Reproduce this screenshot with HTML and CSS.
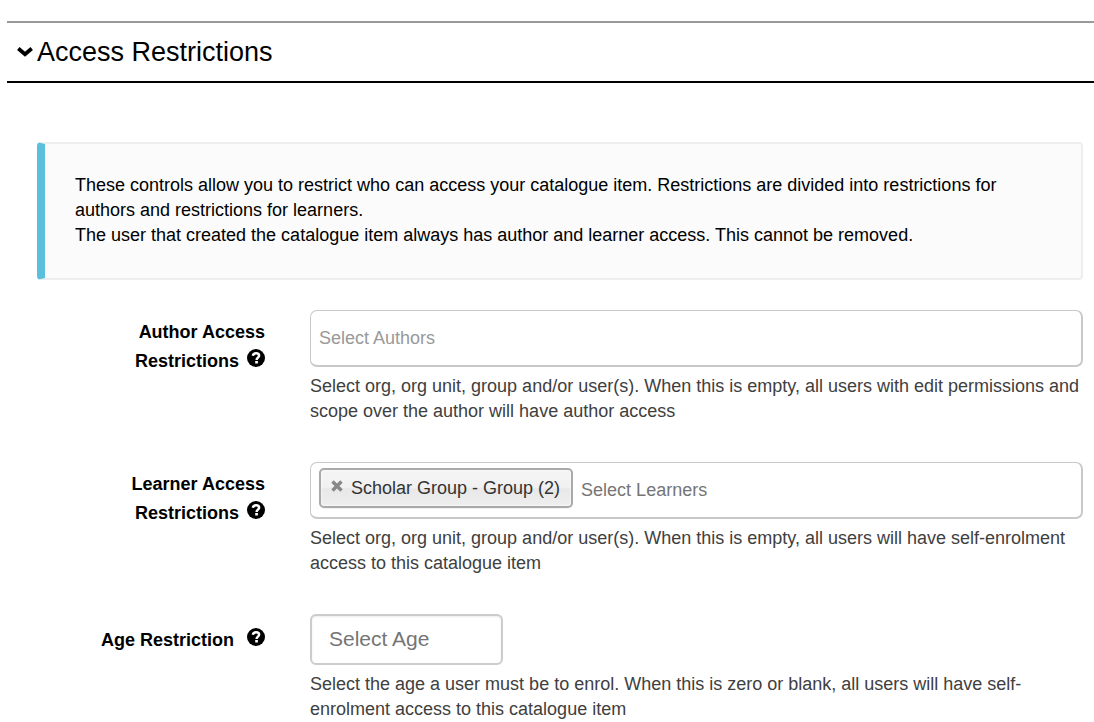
FILE: index.html
```html
<!DOCTYPE html>
<html lang="en">
<head>
<meta charset="utf-8">
<meta name="viewport" content="width=device-width, initial-scale=1">
<title>Access Restrictions</title>
<link rel="stylesheet" href="styles.css">
</head>
<body>
<svg class="sprite" aria-hidden="true">
  <symbol id="icon-help" viewBox="0 0 18 18">
    <circle cx="9" cy="9" r="9" fill="#000"/>
    <path d="M5.800 6.700C6.200 4.900 7.400 4.200 9.100 4.200s3 .9 3 2.400c0 2-2.500 2-2.500 4.300" fill="none" stroke="#fff" stroke-width="2.500"/>
    <rect x="8.200" y="12" width="2.700" height="2.500" fill="#fff"/>
  </symbol>
</svg>
<main class="section">
  <h2 class="section-title">
    <button class="section-toggle" type="button" aria-expanded="true">
      <svg class="chevron" viewBox="0 0 16 10" aria-hidden="true"><path d="M1.300 1.500 8 7.200l6.700-5.700" fill="none" stroke="#000" stroke-width="3.800"/></svg>
      <span>Access Restrictions</span>
    </button>
  </h2>
  <form class="section-body">
    <div class="callout">
      <p>These controls allow you to restrict who can access your catalogue item. Restrictions are divided into restrictions for authors and restrictions for learners.</p>
      <p>The user that created the catalogue item always has author and learner access. This cannot be removed.</p>
    </div>

    <div class="row">
      <div class="label-cell">
        <label for="authors">Author Access Restrictions</label>
        <button class="help" type="button" aria-label="Help for author access"><svg aria-hidden="true"><use href="#icon-help"/></svg></button>
      </div>
      <div class="control">
        <div class="picker">
          <input class="picker-input picker-input-light" id="authors" type="text" placeholder="Select Authors">
        </div>
        <p class="hint">Select org, org unit, group and/or user(s). When this is empty, all users with edit permissions and scope over the author will have author access</p>
      </div>
    </div>

    <div class="row">
      <div class="label-cell">
        <label for="learners">Learner Access Restrictions</label>
        <button class="help" type="button" aria-label="Help for learner access"><svg aria-hidden="true"><use href="#icon-help"/></svg></button>
      </div>
      <div class="control">
        <div class="picker">
          <span class="tag">
            <button class="tag-remove" type="button" aria-label="Remove Scholar Group"><svg viewBox="0 0 12 12" aria-hidden="true"><path d="M1.500 1.500l9 9M10.500 1.500l-9 9" stroke="#888" stroke-width="3.400"/></svg></button>
            <span>Scholar Group - Group (2)</span>
          </span>
          <input class="picker-input" id="learners" type="text" placeholder="Select Learners">
        </div>
        <p class="hint">Select org, org unit, group and/or user(s). When this is empty, all users will have self-enrolment access to this catalogue item</p>
      </div>
    </div>

    <div class="row">
      <div class="label-cell label-cell-single">
        <label for="age">Age Restriction</label>
        <button class="help" type="button" aria-label="Help for age restriction"><svg aria-hidden="true"><use href="#icon-help"/></svg></button>
      </div>
      <div class="control">
        <input class="age-input" id="age" type="text" placeholder="Select Age">
        <p class="hint">Select the age a user must be to enrol. When this is zero or blank, all users will have self-enrolment access to this catalogue item</p>
      </div>
    </div>
  </form>
</main>
</body>
</html>
```
FILE: styles.css
```css
* {
  box-sizing: border-box;
}

body {
  margin: 0;
  background: #fff;
  color: #000;
  font: 18px/25px "Liberation Sans", Arial, sans-serif;
}

p {
  margin: 0;
}

button {
  padding: 0;
  border: 0;
  background: none;
  color: inherit;
  font: inherit;
  cursor: pointer;
}

svg {
  display: block;
}

.sprite {
  position: absolute;
  width: 0;
  height: 0;
}

.section {
  padding: 21px 0 0 7px;
}

.section-title {
  margin: 0;
  border-top: 2px solid #999;
  border-bottom: 2px solid #000;
  font-size: 27px;
  font-weight: 400;
  line-height: 58px;
}

.section-toggle {
  display: flex;
  align-items: center;
  gap: 4px;
  width: 100%;
  padding-left: 10px;
  text-align: left;
}

.chevron {
  width: 16px;
  height: 10px;
  overflow: visible;
}

.section-body {
  padding: 59px 11px 0 30px;
}

.callout {
  margin-bottom: 30px;
  padding: 29px 30px 30px;
  border: 2px solid #eee;
  border-left: 8px solid #5bc0de;
  border-radius: 4px;
  background: #fbfbfb;
}

.row {
  display: grid;
  grid-template-columns: 228px minmax(0, 1fr);
  column-gap: 45px;
  margin-bottom: 38px;
}

.row:last-child {
  margin-bottom: 0;
}

.label-cell {
  padding: 8px 0 0 60px;
  font-weight: 700;
  line-height: 29px;
  text-align: right;
}

.label-cell-single {
  padding: 12px 0 0;
}

.label-cell-single label {
  padding-right: 5px;
}

.help {
  display: inline-block;
  margin-left: 3px;
  line-height: 18px;
  vertical-align: 0;
}

.help svg {
  width: 18px;
  height: 18px;
}

.picker {
  display: flex;
  align-items: center;
  gap: 8px;
  height: 57px;
  padding: 0 8px;
  border: 1px solid #c8c8c8;
  border-width: 1px 2px 2px 1px;
  border-radius: 7px;
}

.picker-input {
  flex: 1;
  min-width: 0;
  height: 40px;
  padding: 0;
  border: 0;
  outline: 0;
  background: none;
  color: #333;
  font: inherit;
}

.picker-input::placeholder,
.age-input::placeholder {
  color: #757575;
}

.picker-input-light::placeholder {
  color: #999;
}

.tag {
  display: flex;
  align-items: center;
  gap: 8px;
  height: 40px;
  margin-bottom: 4px;
  padding: 0 11px 0 10px;
  border: 2px solid #aaa;
  border-radius: 5px;
  background: linear-gradient(#f4f4f4 20%, #f0f0f0 50%, #e8e8e8 52%, #eee);
  box-shadow: inset 0 0 3px #fff, 0 1px 0 rgba(0, 0, 0, 0.05);
  color: #333;
  white-space: nowrap;
}

.tag-remove {
  margin-bottom: 5px;
}

.tag-remove svg {
  width: 12px;
  height: 12px;
}

.age-input {
  display: block;
  width: 193px;
  height: 51px;
  padding: 0 18px 2px 17px;
  border: 2px solid #ccc;
  border-radius: 6px;
  box-shadow: inset 0 1px 2px rgba(0, 0, 0, 0.08);
  color: #555;
  font: 21px/28px "Liberation Sans", Arial, sans-serif;
}

.hint {
  margin-top: 7px;
  color: #404040;
}
```
